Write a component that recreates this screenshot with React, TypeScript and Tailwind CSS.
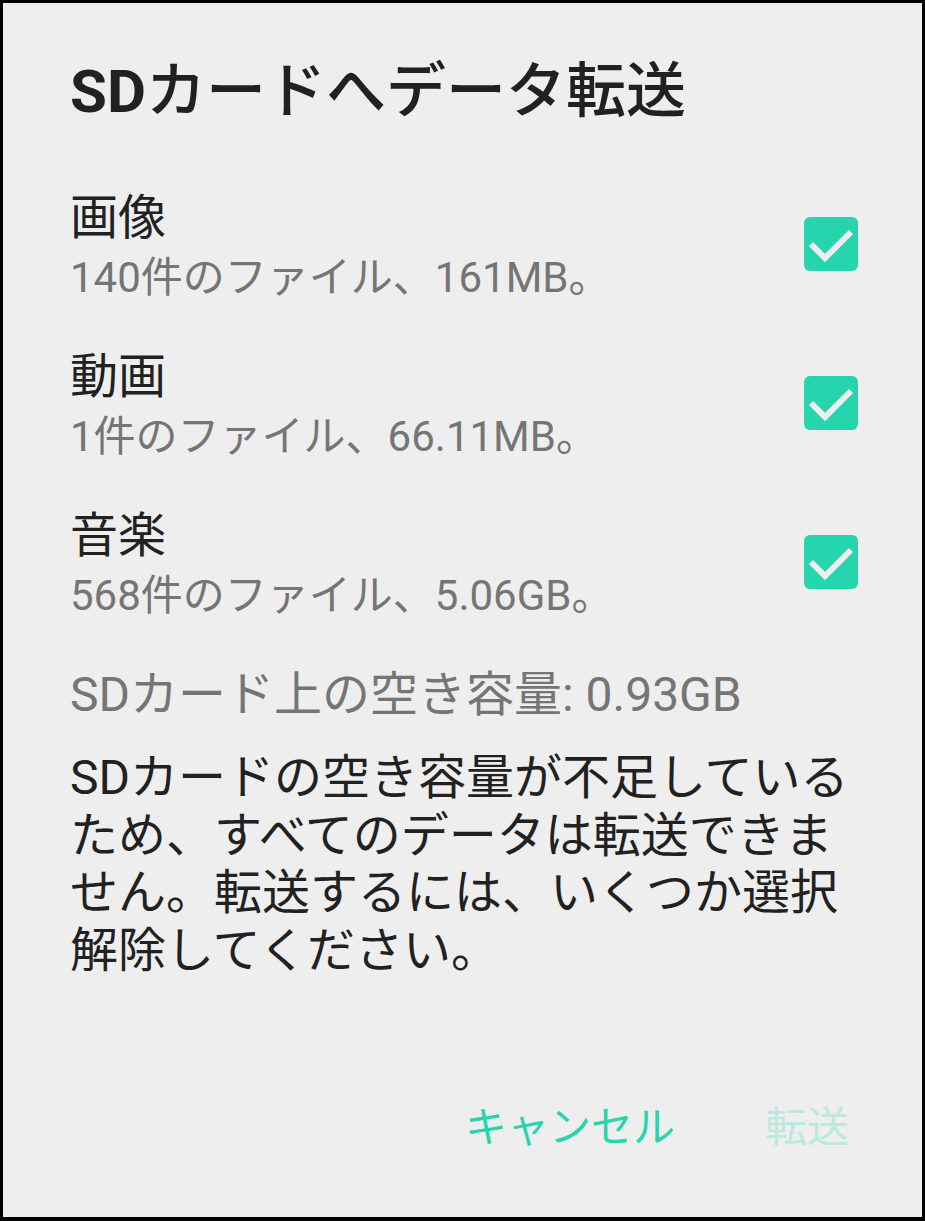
const items = [
  { title: "画像", detail: "140件のファイル、161MB。" },
  { title: "動画", detail: "1件のファイル、66.11MB。" },
  { title: "音楽", detail: "568件のファイル、5.06GB。" },
];

function CheckBox() {
  return (
    <svg width="54" height="54" viewBox="0 0 54 54" className="shrink-0 mt-[29px]">
      <rect x="0" y="0" width="54" height="54" rx="6" fill="#26d4ae" />
      <polyline
        points="7,27 21,41 47,15"
        fill="none"
        stroke="#eeeeee"
        strokeWidth="6"
      />
    </svg>
  );
}

export default function App() {
  return (
    <div className="w-[925px] h-[1221px] bg-[#eeeeee] border-black border-t-[3px] border-l-[3px] border-r-[3px] border-b-[4px] flex flex-col pl-[67px] pr-[64px] pt-[53px] font-['Roboto','Noto_Sans_CJK_JP',sans-serif]">
      <h1 className="text-[60px] leading-[72px] font-medium text-[#212121]">
        <span className="font-bold">SD</span>カードへデータ転送
      </h1>

      <div className="mt-[60px] flex flex-col gap-[39px]">
        {items.map((it) => (
          <div key={it.title} className="flex items-start justify-between">
            <div className="flex flex-col">
              <span className="text-[48px] leading-[60px] text-[#212121]">{it.title}</span>
              <span className="text-[42px] leading-[60px] text-[#757575]">{it.detail}</span>
            </div>
            <CheckBox />
          </div>
        ))}
      </div>

      <p className="mt-[39px] text-[48px] leading-[60px] text-[#757575]">
        SDカード上の空き容量: 0.93GB
      </p>

      <p className="mt-[24px] text-[48px] leading-[57.5px] text-[#212121]">
        SDカードの空き容量が不足しているため、すべてのデータは転送できません。転送するには、いくつか選択解除してください。
      </p>

      <div className="mt-auto mb-[59px] flex justify-end items-center gap-[90px] pr-[9px]">
        <span className="text-[42px] leading-[60px] text-[#26d4ae]">キャンセル</span>
        <span className="text-[42px] leading-[60px] text-[#bce9de]">転送</span>
      </div>
    </div>
  );
}
